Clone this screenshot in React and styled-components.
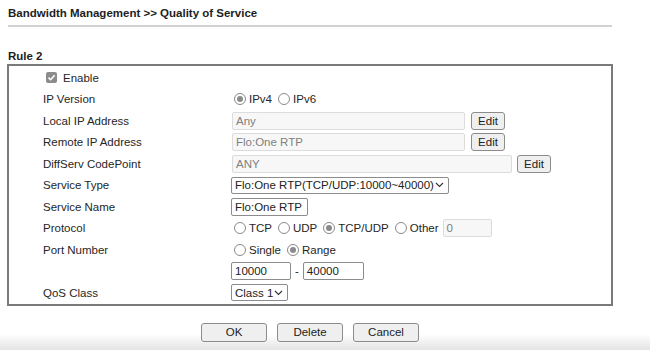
import React from "react";
import styled, { createGlobalStyle } from "styled-components";

const GlobalStyle = createGlobalStyle`
  html, body { margin: 0; padding: 0; }
  body {
    font-family: "Liberation Sans", Arial, sans-serif;
    font-size: 11.5px;
    color: #222;
    height: 350px;
    background: linear-gradient(to bottom, #fff 0, #fff 334px, #e4e4e4 350px);
    overflow: hidden;
  }
`;

const Page = styled.div`
  width: 606px;
  margin-left: 7px;
`;

const Title = styled.div`
  height: 25px;
  margin: 0 1px;
  display: flex;
  align-items: center;
  font-weight: bold;
  color: #1e1e1e;
  border-bottom: 2px solid #d2d2d2;
`;

const RuleHeading = styled.div`
  height: 37px;
  box-sizing: border-box;
  display: flex;
  align-items: flex-end;
  padding: 0 0 2px 1px;
  font-weight: bold;
  color: #1e1e1e;
`;

const Box = styled.div`
  border: 2px solid #7a7a7a;
  padding: 1px 0 0 34px;
  display: grid;
  grid-template-columns: 188px 1fr;
  grid-auto-rows: 21.5px;
  align-items: center;
`;

const Label = styled.div`
  color: #262626;
  display: flex;
  align-items: center;
`;

const Value = styled.div`
  display: flex;
  align-items: center;
  color: #262626;
`;

const CheckBox = styled.span`
  width: 11px;
  height: 11px;
  margin: 0 6px 0 3px;
  border-radius: 2px;
  background: #8c8c8c;
  display: inline-flex;
  align-items: center;
  justify-content: center;
`;

const RadioCircle = styled.span`
  box-sizing: border-box;
  width: 12px;
  height: 12px;
  border-radius: 50%;
  border: 1px solid #8a8a8a;
  background: #fff;
  margin: 0 3px 0 ${(p) => (p.$first ? 3 : 6)}px;
  display: inline-flex;
  align-items: center;
  justify-content: center;
  flex: none;
  &::after {
    content: "";
    width: 6px;
    height: 6px;
    border-radius: 50%;
    background: ${(p) => (p.$checked ? "#8a8a8a" : "transparent")};
  }
`;

const RadioText = styled.span`
  color: #262626;
`;

const Field = styled.div`
  box-sizing: border-box;
  width: ${(p) => p.$w}px;
  height: ${(p) => (p.$h ? p.$h : 18)}px;
  margin-left: ${(p) => (p.$ml ? p.$ml : 0)}px;
  padding: 0 3px;
  display: flex;
  align-items: center;
  border-radius: 2px;
  border: 1px solid ${(p) => (p.$readonly ? "#dcdcdc" : "#8c8c8c")};
  background: ${(p) => (p.$readonly ? "#f7f7f7" : "#fff")};
  color: ${(p) => (p.$readonly ? "#808080" : "#222")};
  flex: none;
`;

const Select = styled.div`
  box-sizing: border-box;
  width: ${(p) => p.$w}px;
  height: 17px;
  padding: 0 4px 0 3px;
  display: flex;
  align-items: center;
  justify-content: space-between;
  border: 1px solid #8c8c8c;
  border-radius: 2px;
  background: #fff;
  color: #222;
  flex: none;
`;

const SmallButton = styled.div`
  box-sizing: border-box;
  width: 34px;
  height: 18px;
  margin-left: ${(p) => p.$ml}px;
  display: flex;
  align-items: center;
  justify-content: center;
  border: 1px solid #8c8c8c;
  border-radius: 3px;
  background: #efefef;
  color: #222;
  flex: none;
`;

const Dash = styled.span`
  margin: 0 4px 0 4px;
  color: #262626;
`;

const ButtonBar = styled.div`
  display: flex;
  justify-content: center;
  gap: 10px;
  margin-top: 17px;
`;

const ActionButton = styled.div`
  box-sizing: border-box;
  width: 66px;
  height: 19px;
  display: flex;
  align-items: center;
  justify-content: center;
  border: 1px solid #8c8c8c;
  border-radius: 3px;
  background: #efefef;
  color: #222;
`;

const Chevron = () => (
  <svg width="9" height="6" viewBox="0 0 9 6">
    <polyline points="1,1 4.5,4.5 8,1" fill="none" stroke="#333" strokeWidth="1.1" />
  </svg>
);

const Check = () => (
  <svg width="9" height="9" viewBox="0 0 9 9">
    <polyline points="1.5,4.6 3.6,6.7 7.6,2.2" fill="none" stroke="#fff" strokeWidth="1.6" />
  </svg>
);

const Radio = ({ checked, first, children }) => (
  <>
    <RadioCircle $checked={checked} $first={first} />
    <RadioText>{children}</RadioText>
  </>
);

export default function App() {
  return (
    <>
      <GlobalStyle />
      <Page>
        <Title>Bandwidth Management &gt;&gt; Quality of Service</Title>
        <RuleHeading>Rule 2</RuleHeading>
        <Box>
          <Label>
            <CheckBox>
              <Check />
            </CheckBox>
            Enable
          </Label>
          <Value />

          <Label>IP Version</Label>
          <Value>
            <Radio checked first>IPv4</Radio>
            <Radio>IPv6</Radio>
          </Value>

          <Label>Local IP Address</Label>
          <Value>
            <Field $readonly $w={233} $ml={1}>Any</Field>
            <SmallButton $ml={6}>Edit</SmallButton>
          </Value>

          <Label>Remote IP Address</Label>
          <Value>
            <Field $readonly $w={233} $ml={1}>Flo:One RTP</Field>
            <SmallButton $ml={6}>Edit</SmallButton>
          </Value>

          <Label>DiffServ CodePoint</Label>
          <Value>
            <Field $readonly $w={280} $ml={1}>ANY</Field>
            <SmallButton $ml={5}>Edit</SmallButton>
          </Value>

          <Label>Service Type</Label>
          <Value>
            <Select $w={218}>
              <span>Flo:One RTP(TCP/UDP:10000~40000)</span>
              <Chevron />
            </Select>
          </Value>

          <Label>Service Name</Label>
          <Value>
            <Field $w={77}>Flo:One RTP</Field>
          </Value>

          <Label>Protocol</Label>
          <Value>
            <Radio first>TCP</Radio>
            <Radio>UDP</Radio>
            <Radio checked>TCP/UDP</Radio>
            <Radio>Other</Radio>
            <Field $readonly $w={49} $ml={4}>0</Field>
          </Value>

          <Label>Port Number</Label>
          <Value>
            <Radio first>Single</Radio>
            <Radio checked>Range</Radio>
          </Value>

          <Label />
          <Value>
            <Field $w={60}>10000</Field>
            <Dash>-</Dash>
            <Field $w={61}>40000</Field>
          </Value>

          <Label>QoS Class</Label>
          <Value>
            <Select $w={57}>
              <span>Class 1</span>
              <Chevron />
            </Select>
          </Value>
        </Box>
        <ButtonBar>
          <ActionButton>OK</ActionButton>
          <ActionButton>Delete</ActionButton>
          <ActionButton>Cancel</ActionButton>
        </ButtonBar>
      </Page>
    </>
  );
}
